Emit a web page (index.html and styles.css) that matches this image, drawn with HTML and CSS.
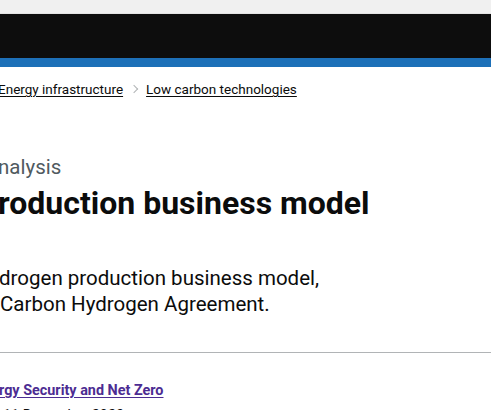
FILE: index.html
```
<!DOCTYPE html>
<html lang="en">
<head>
    <meta charset="UTF-8">
    <meta name="viewport" content="width=device-width, initial-scale=1.0">
    <title>Hydrogen production business model - GOV.UK</title>
    <link rel="stylesheet" href="styles.css">
</head>
<body>
    <div class="topbar"></div>
    <header class="header"></header>
    <div class="stripe"></div>

    <main class="page">
        <nav class="breadcrumbs">
            <a href="#" class="crumb crumb-first">Energy infrastructure</a>
            <span class="chevron"></span>
            <a href="#" class="crumb">Low carbon technologies</a>
        </nav>

        <span class="caption">nalysis</span>
        <h1 class="title">production business model</h1>

        <p class="lead">
            <span class="lead-line lead-line-1">drogen production business model,</span>
            <span class="lead-line lead-line-2">Carbon Hydrogen Agreement.</span>
        </p>

        <hr class="divider">

        <div class="meta">
            <a href="#" class="org-link">rgy Security and Net Zero</a>
            <span class="meta-date">11 December 2023</span>
        </div>
    </main>
</body>
</html>
```

FILE: styles.css
```
body {
    margin: 0;
    font-family: Roboto, Arial, sans-serif;
    color: #0b0c0c;
    background-color: #ffffff;
    overflow: hidden;
}

.topbar {
    height: 13px;
    background-color: #f0f0f0;
    border-bottom: 1px solid #e4e4e4;
}

.header {
    height: 44px;
    background-color: #0d0d0d;
}

.stripe {
    height: 9px;
    background-color: #1d70b8;
}

.page {
    padding-top: 12px;
}

.breadcrumbs {
    display: flex;
    align-items: center;
    gap: 6px;
    font-size: 13.5px;
    line-height: 20px;
}

.crumb {
    color: #0b0c0c;
    text-decoration: underline;
    text-decoration-thickness: 1px;
    text-underline-offset: 2px;
}

.crumb-first {
    margin-left: -2px;
}

.chevron {
    width: 5px;
    height: 5px;
    border-top: 1px solid #b1b4b6;
    border-right: 1px solid #b1b4b6;
    transform: rotate(45deg);
    margin: 0 3px 0 2px;
}

.caption {
    display: block;
    margin-top: 54px;
    margin-left: -2px;
    font-size: 20.5px;
    line-height: 28px;
    color: #505a5f;
}

.title {
    margin: 4px 0 0 -20px;
    font-size: 32px;
    line-height: 36px;
    font-weight: 700;
}

.lead {
    margin: 44px 0 0;
    font-size: 20.5px;
    line-height: 26px;
}

.lead-line {
    display: block;
}

.lead-line-1 {
    margin-left: -1px;
}

.divider {
    margin: 35px 0 0;
    border: 0;
    border-top: 1px solid #b1b4b6;
}

.meta {
    padding-top: 28px;
    font-size: 14.4px;
    line-height: 20px;
}

.org-link {
    display: block;
    margin-left: -1px;
    color: #4c2c92;
    font-weight: 700;
    text-decoration: underline;
    text-underline-offset: 2px;
}

.meta-date {
    display: block;
    margin: 5px 0 0 3px;
}
```
